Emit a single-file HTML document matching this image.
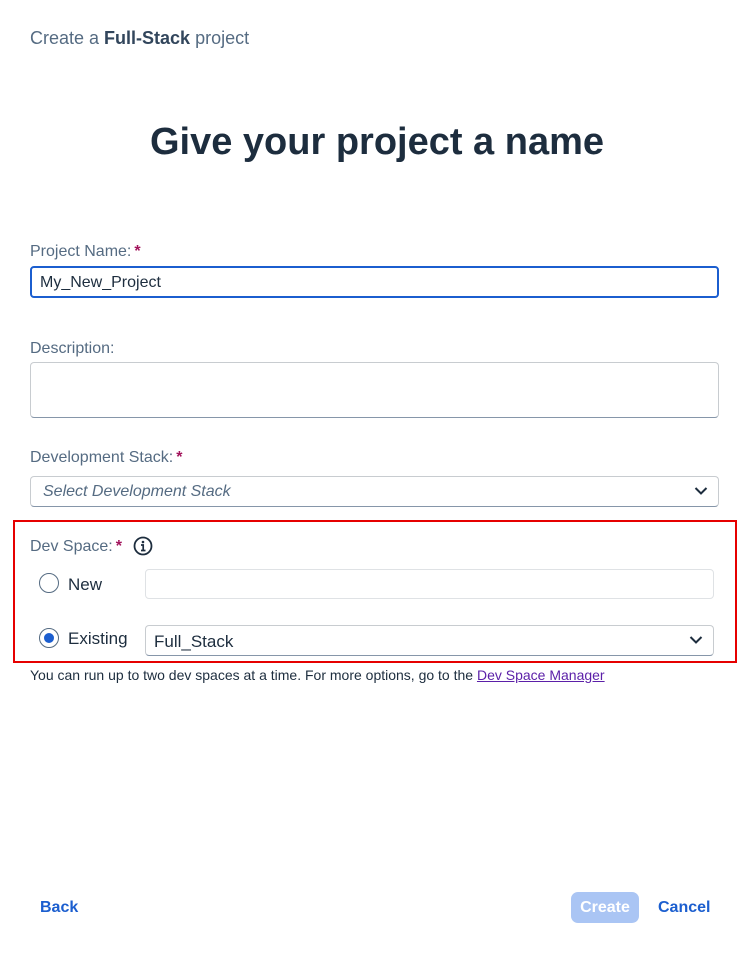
<!DOCTYPE html>
<html><head><meta charset="utf-8"><style>
body{margin:0;width:754px;height:953px;background:#fff;font-family:"Liberation Sans",sans-serif;position:relative;overflow:hidden}
.a{position:absolute}
.lbl{color:#556b82;font-size:16px}
.star{color:#a2145c;font-weight:bold;margin-left:3px}
.inp{position:absolute;border:1px solid #c8ccd0;border-bottom-color:#8696a9;border-radius:4px;background:#fff;box-sizing:border-box}
</style></head><body>
<div class="a" style="left:30px;top:28px;font-size:18px;color:#556b82">Create a <b style="color:#32465c">Full-Stack</b> project</div>
<div class="a" style="left:0;width:754px;top:121px;text-align:center;font-size:38px;font-weight:bold;color:#1d2d3e">Give your project a name</div>

<div class="a lbl" style="left:30px;top:243px">Project Name:<span class="star">*</span></div>
<div class="inp" style="left:30px;top:266px;width:689px;height:32px;border:2px solid #1b5ecf"><span class="a" style="left:8px;top:6px;font-size:16px;color:#1d2d3e">My_New_Project</span></div>

<div class="a lbl" style="left:30px;top:340px">Description:</div>
<div class="inp" style="left:30px;top:362px;width:689px;height:56px"></div>

<div class="a lbl" style="left:30px;top:449px">Development Stack:<span class="star">*</span></div>
<div class="inp" style="left:30px;top:476px;width:689px;height:31px"><span class="a" style="left:12px;top:6px;font-size:16px;font-style:italic;color:#556b82">Select Development Stack</span>
<svg class="a" style="right:10px;top:9px" width="14" height="10" viewBox="0 0 14 10"><path d="M1.5 2 L7 7.5 L12.5 2" fill="none" stroke="#1d2d3e" stroke-width="2"/></svg></div>

<div class="a" style="left:13px;top:520px;width:724px;height:143px;border:2px solid #e60000;box-sizing:border-box"></div>
<div class="a lbl" style="left:30px;top:538px">Dev Space:<span class="star">*</span></div>
<svg class="a" style="left:133px;top:536px" width="20" height="20" viewBox="0 0 20 20"><circle cx="10" cy="10" r="8.5" fill="none" stroke="#1d2d3e" stroke-width="1.8"/><circle cx="10" cy="6" r="1.3" fill="#1d2d3e"/><path d="M8 9h2.2v5.5M8 14.5h4.5" fill="none" stroke="#1d2d3e" stroke-width="1.7"/></svg>

<div class="a" style="left:39px;top:573px;width:20px;height:20px;border:1.5px solid #556b82;border-radius:50%;box-sizing:border-box"></div>
<div class="a" style="left:68px;top:575px;font-size:17px;color:#1d2d3e">New</div>
<div class="inp" style="left:145px;top:569px;width:569px;height:30px;border-color:#dfe2e5"></div>

<div class="a" style="left:39px;top:628px;width:20px;height:20px;border:1.5px solid #556b82;border-radius:50%;box-sizing:border-box"><div class="a" style="left:3.5px;top:3.5px;width:10px;height:10px;border-radius:50%;background:#1b5ecf"></div></div>
<div class="a" style="left:68px;top:629px;font-size:17px;color:#1d2d3e">Existing</div>
<div class="inp" style="left:145px;top:625px;width:569px;height:31px"><span class="a" style="left:8px;top:6px;font-size:17px;color:#1d2d3e">Full_Stack</span>
<svg class="a" style="right:10px;top:9px" width="14" height="10" viewBox="0 0 14 10"><path d="M1.5 2 L7 7.5 L12.5 2" fill="none" stroke="#1d2d3e" stroke-width="2"/></svg></div>

<div class="a" style="left:30px;top:667px;font-size:14px;color:#1d2d3e">You can run up to two dev spaces at a time. For more options, go to the <span style="color:#5b1fa8;text-decoration:underline">Dev Space Manager</span></div>

<div class="a" style="left:40px;top:899px;font-size:16px;font-weight:bold;color:#1b5ecf">Back</div>
<div class="a" style="left:571px;top:892px;width:68px;height:31px;border-radius:7px;background:#aac5f4;color:#fff;font-size:16px;font-weight:bold;text-align:center;line-height:31px">Create</div>
<div class="a" style="left:658px;top:899px;font-size:16px;font-weight:bold;color:#1b5ecf">Cancel</div>
</body></html>
